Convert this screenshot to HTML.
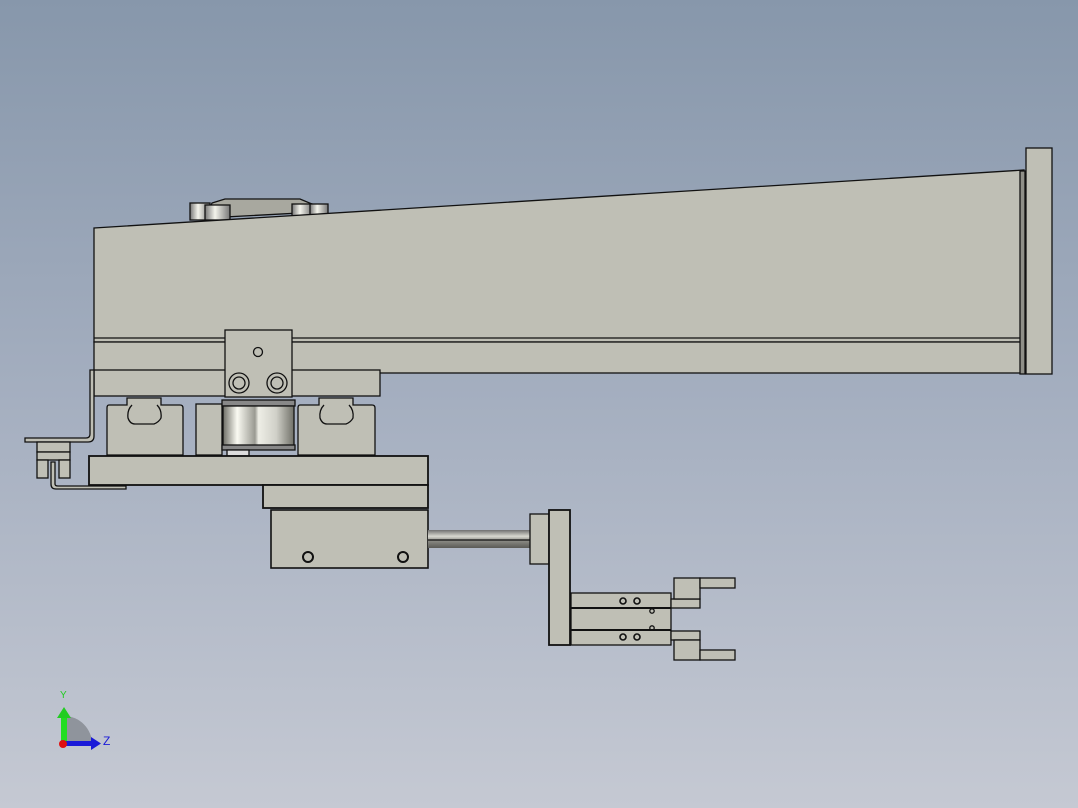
<!DOCTYPE html>
<html><head><meta charset="utf-8"><style>html,body{margin:0;padding:0;width:1078px;height:808px;overflow:hidden}svg{display:block}</style></head>
<body>
<svg width="1078" height="808" viewBox="0 0 1078 808" xmlns="http://www.w3.org/2000/svg">
<defs>
<linearGradient id="bg" x1="0" y1="0" x2="0" y2="1"><stop offset="0" stop-color="#8797ab"/><stop offset="0.5" stop-color="#a5afc0"/><stop offset="1" stop-color="#c5c9d3"/></linearGradient>
<linearGradient id="pul" x1="0" y1="0" x2="1" y2="0"><stop offset="0" stop-color="#6e6e66"/><stop offset="0.2" stop-color="#fafaf2"/><stop offset="0.45" stop-color="#9a9a92"/><stop offset="0.5" stop-color="#eeeee6"/><stop offset="0.75" stop-color="#d0d0c8"/><stop offset="1" stop-color="#707068"/></linearGradient>
<linearGradient id="rod" x1="0" y1="0" x2="0" y2="1"><stop offset="0" stop-color="#707070"/><stop offset="0.35" stop-color="#d8d8d0"/><stop offset="0.6" stop-color="#8a8a84"/><stop offset="1" stop-color="#5a5a56"/></linearGradient>
<linearGradient id="bolt" x1="0" y1="0" x2="1" y2="0"><stop offset="0" stop-color="#777"/><stop offset="0.4" stop-color="#f4f4ec"/><stop offset="1" stop-color="#777"/></linearGradient>
</defs>
<rect width="1078" height="808" fill="url(#bg)"/>
<g stroke="#111" stroke-width="1.3" fill="#bfbfb5">
<!-- top bump -->
<path d="M206,218 L212,203 L225,199 L300,199 L312,204 L318,212 Z" fill="#a8a89f"/>
<rect x="190" y="203" width="20" height="17" fill="url(#bolt)"/>
<rect x="205" y="205" width="25" height="15" fill="url(#bolt)"/>
<rect x="292" y="204" width="20" height="14" fill="url(#bolt)"/>
<rect x="310" y="204" width="18" height="12" fill="url(#bolt)"/>
<!-- main beam -->
<path d="M94,228 L1024,170 L1024,342 L94,342 Z"/>
<line x1="94" y1="338" x2="1024" y2="338"/>
<rect x="94" y="342" width="930" height="31"/>
<rect x="1020" y="171" width="5" height="203" fill="#8f8f88"/>
<rect x="1026" y="148" width="26" height="226"/>
<rect x="94" y="370" width="286" height="26"/>
<!-- left sheet bracket -->
<path d="M90,370 L90,434 Q90,438 86,438 L25,438 L25,442 L88,442 Q94,442 94,436 L94,370 Z"/>
<rect x="37" y="442" width="33" height="10"/>
<rect x="37" y="452" width="33" height="8"/>
<rect x="37" y="460" width="11" height="18"/>
<rect x="59" y="460" width="11" height="18"/>
<path d="M51,462 L55,462 L55,484 Q55,486 58,486 L126,486 L126,489 L56,489 Q51,489 51,484 Z"/>
<!-- rail blocks -->
<path d="M127,398 L127,405 L109,405 Q107,405 107,408 L107,455 L183,455 L183,408 Q183,405 180,405 L161,405 L161,398 Z"/>
<path d="M132,405 Q127,410 128,418 Q130,424 135,424 L154,424 Q159,422 161,418 Q162,410 157,405" fill="none"/>
<path d="M319,398 L319,405 L300,405 Q298,405 298,408 L298,455 L375,455 L375,408 Q375,405 372,405 L353,405 L353,398 Z"/>
<path d="M324,405 Q319,410 320,418 Q322,424 327,424 L346,424 Q351,422 353,418 Q354,410 349,405" fill="none"/>
<rect x="196" y="404" width="26" height="51"/>
<!-- pulley -->
<rect x="222" y="400" width="73" height="6" fill="#888"/>
<rect x="223" y="406" width="71" height="43" fill="url(#pul)"/>
<rect x="222" y="445" width="73" height="5" fill="#888"/>
<rect x="227" y="450" width="22" height="6" fill="#ddd"/>
<!-- bracket -->
<rect x="225" y="330" width="67" height="67"/>
<circle cx="258" cy="352" r="4.5" fill="none"/>
<circle cx="239" cy="383" r="10" fill="none"/><circle cx="239" cy="383" r="6" fill="none"/>
<circle cx="277" cy="383" r="10" fill="none"/><circle cx="277" cy="383" r="6" fill="none"/>
<!-- base plates -->
<rect x="89" y="456" width="339" height="29" stroke-width="1.8"/>
<rect x="263" y="485" width="165" height="23" stroke-width="1.8"/>
<rect x="271" y="510" width="157" height="58" stroke-width="1.6"/>
<circle cx="308" cy="557" r="5" fill="none" stroke-width="2"/>
<circle cx="403" cy="557" r="5" fill="none" stroke-width="2"/>
<!-- rod -->
<rect x="428" y="530" width="102" height="18" fill="url(#rod)" stroke="none"/>
<line x1="428" y1="540" x2="530" y2="540"/>
<rect x="530" y="514" width="19" height="50"/>
<rect x="549" y="510" width="21" height="135" stroke-width="1.8"/>
<!-- gripper -->
<rect x="571" y="593" width="100" height="52"/>
<line x1="571" y1="608" x2="671" y2="608" stroke-width="2"/>
<line x1="571" y1="630" x2="671" y2="630" stroke-width="2"/>
<circle cx="623" cy="601" r="3" fill="none" stroke-width="1.6"/><circle cx="637" cy="601" r="3" fill="none" stroke-width="1.6"/>
<circle cx="623" cy="637" r="3" fill="none" stroke-width="1.6"/><circle cx="637" cy="637" r="3" fill="none" stroke-width="1.6"/>
<circle cx="652" cy="611" r="2.2" fill="none"/><circle cx="652" cy="628" r="2.2" fill="none"/>
<rect x="671" y="599" width="29" height="9"/>
<rect x="671" y="631" width="29" height="9"/>
<rect x="674" y="578" width="26" height="21"/>
<rect x="700" y="578" width="35" height="10"/>
<rect x="674" y="640" width="26" height="20"/>
<rect x="700" y="650" width="35" height="10"/>
</g>
<!-- triad -->
<path d="M64,716 A28,28 0 0 1 92,744 L64,744 Z" fill="#8f949c"/>
<rect x="61" y="717" width="6" height="27" fill="#22dd22"/>
<path d="M57,718 L64,707 L71,718 Z" fill="#22cc22"/>
<rect x="64" y="741" width="28" height="5" fill="#1a1ad8"/>
<path d="M91,737 L101,743.5 L91,750 Z" fill="#1a1ad8"/>
<circle cx="63" cy="744" r="4" fill="#e01010"/>
<text x="60" y="698" font-family="Liberation Sans, sans-serif" font-size="10" fill="#22cc22">Y</text>
<text x="103" y="745" font-family="Liberation Sans, sans-serif" font-size="12" fill="#1a1ad8">Z</text>
</svg>
</body></html>
